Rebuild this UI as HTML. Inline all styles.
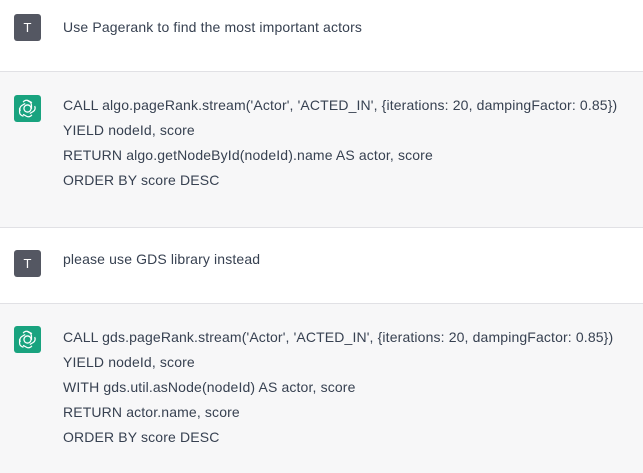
<!DOCTYPE html>
<html><head><style>
body{margin:0;width:643px;height:473px;overflow:hidden;font-family:"Liberation Sans",sans-serif;font-size:14px;letter-spacing:0.14px;color:#374151;background:#f7f7f8}
.b{position:absolute;left:0;width:643px;box-sizing:border-box}
.w{background:#fff}
.g{background:#f7f7f8}
.line{border-bottom:1px solid #e1e1e5}
.av{position:absolute;left:14px;width:27px;height:27px;border-radius:3px;display:flex;align-items:center;justify-content:center;letter-spacing:0}
.t{background:#545762;color:#fff;font-size:13px}
.gr{background:#19a37f}
.tx{position:absolute;left:63px;line-height:25px;white-space:nowrap}
</style></head><body>
<div class="b w line" style="top:0;height:72px">
<div class="av t" style="top:14px">T</div>
<div class="tx" style="top:15px">Use Pagerank to find the most important actors</div>
</div>
<div class="b g line" style="top:72px;height:156px">
<div class="av gr" style="top:23px"><svg width="19" height="19" viewBox="0 0 24 24" fill="none" stroke="#fff" stroke-width="1.6"><circle cx="12" cy="12" r="4.5"/><path d="M12 2.5a5 5 0 0 1 5 5v5M21 9a5 5 0 0 1-1.8 6.8l-4.3 2.5M17.5 20a5 5 0 0 1-6.8 1.8l-4.3-2.5M7 21.5a5 5 0 0 1-5-5v-5M3 15a5 5 0 0 1 1.8-6.8l4.3-2.5M6.5 4a5 5 0 0 1 6.8-1.8l4.3 2.5"/></svg></div>
<div class="tx" style="top:21px">CALL algo.pageRank.stream('Actor', 'ACTED_IN', {iterations: 20, dampingFactor: 0.85})<br>YIELD nodeId, score<br>RETURN algo.getNodeById(nodeId).name AS actor, score<br>ORDER BY score DESC</div>
</div>
<div class="b w line" style="top:228px;height:76px">
<div class="av t" style="top:22px">T</div>
<div class="tx" style="top:19px">please use GDS library instead</div>
</div>
<div class="b g" style="top:304px;height:169px">
<div class="av gr" style="top:22px"><svg width="19" height="19" viewBox="0 0 24 24" fill="none" stroke="#fff" stroke-width="1.6"><circle cx="12" cy="12" r="4.5"/><path d="M12 2.5a5 5 0 0 1 5 5v5M21 9a5 5 0 0 1-1.8 6.8l-4.3 2.5M17.5 20a5 5 0 0 1-6.8 1.8l-4.3-2.5M7 21.5a5 5 0 0 1-5-5v-5M3 15a5 5 0 0 1 1.8-6.8l4.3-2.5M6.5 4a5 5 0 0 1 6.8-1.8l4.3 2.5"/></svg></div>
<div class="tx" style="top:21px">CALL gds.pageRank.stream('Actor', 'ACTED_IN', {iterations: 20, dampingFactor: 0.85})<br>YIELD nodeId, score<br>WITH gds.util.asNode(nodeId) AS actor, score<br>RETURN actor.name, score<br>ORDER BY score DESC</div>
</div>
</body></html>
